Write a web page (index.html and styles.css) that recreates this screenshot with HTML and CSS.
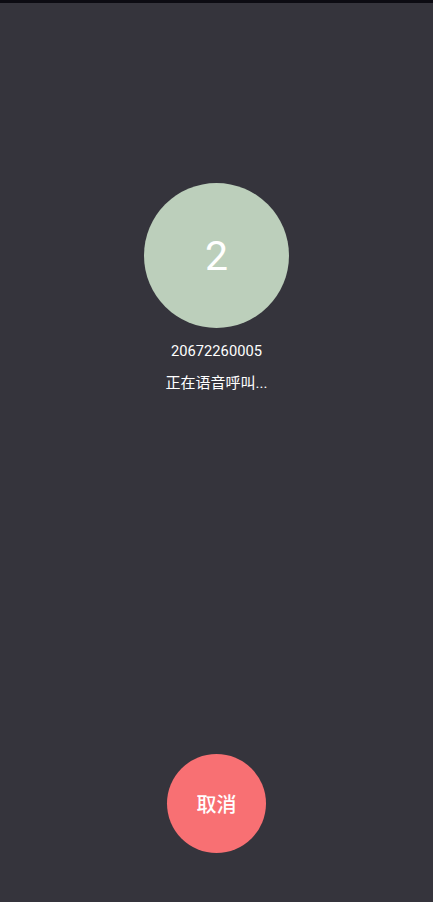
FILE: index.html
```html
<!DOCTYPE html>
<html lang="zh">
<head>
<meta charset="utf-8">
<link rel="stylesheet" href="styles.css">
</head>
<body>
<div class="topbar"></div>
<main class="screen">
  <section class="caller">
    <div class="avatar">2</div>
    <div class="number">20672260005</div>
    <div class="status">正在语音呼叫...</div>
  </section>
  <section class="actions">
    <button class="cancel">取消</button>
  </section>
</main>
</body>
</html>
```
FILE: styles.css
```css
html, body {
  margin: 0;
  padding: 0;
  height: 100%;
}
body {
  background: #35343c;
  font-family: Roboto, "Noto Sans CJK SC", sans-serif;
  color: #ffffff;
  display: flex;
  flex-direction: column;
  height: 902px;
  overflow: hidden;
}
.topbar {
  height: 3px;
  background: #0c0b12;
  flex: none;
}
.screen {
  flex: 1;
  display: flex;
  flex-direction: column;
  align-items: center;
  justify-content: space-between;
  padding-top: 180px;
  padding-bottom: 49px;
}
.caller {
  display: flex;
  flex-direction: column;
  align-items: center;
}
.avatar {
  width: 145px;
  height: 145px;
  border-radius: 50%;
  background: #bccfbb;
  display: flex;
  align-items: center;
  justify-content: center;
  font-size: 41px;
  font-weight: 400;
  color: #ffffff;
}
.number {
  margin-top: 14px;
  font-size: 14.7px;
  line-height: 18px;
}
.status {
  margin-top: 14px;
  font-size: 15px;
  line-height: 18px;
}
.cancel {
  width: 99px;
  height: 99px;
  border-radius: 50%;
  border: none;
  background: #f87073;
  color: #ffffff;
  font-family: "Noto Sans CJK SC", sans-serif;
  font-size: 20px;
  font-weight: 500;
  padding: 0;
}
```
